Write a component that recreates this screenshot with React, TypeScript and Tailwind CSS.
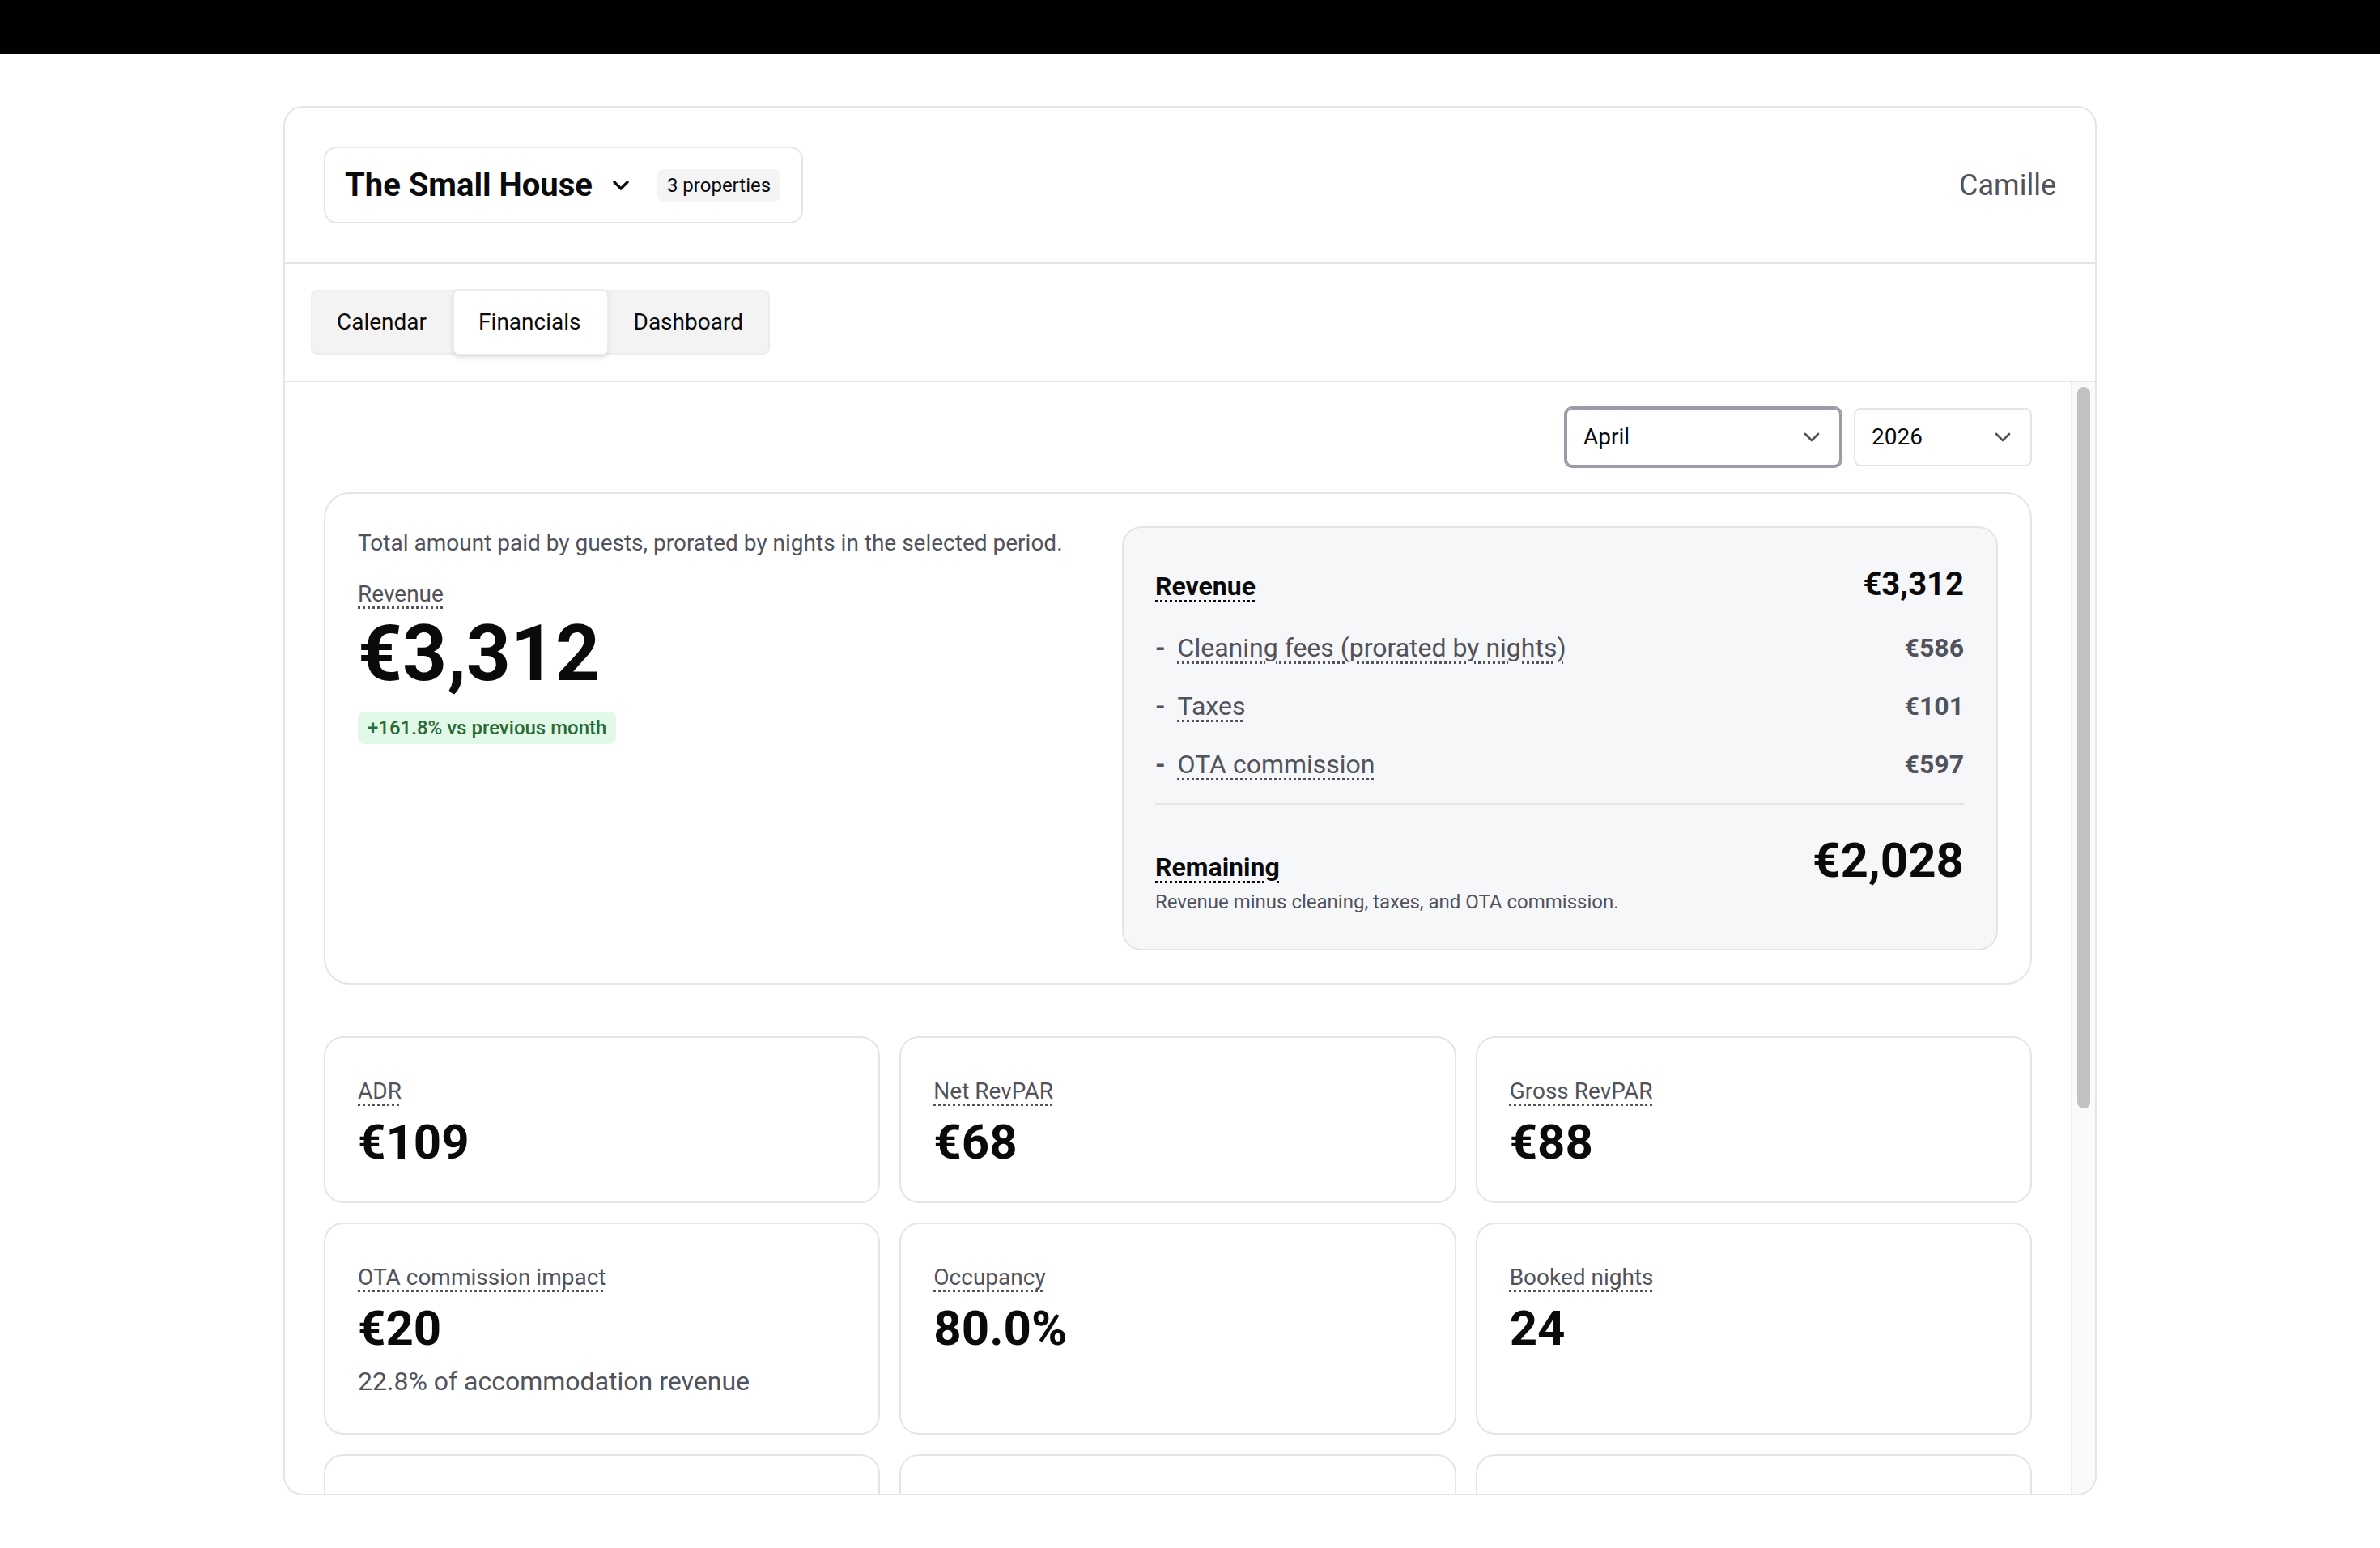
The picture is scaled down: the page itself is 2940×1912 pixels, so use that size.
import { ChevronDown } from 'lucide-react';

const dotted = 'underline decoration-dotted decoration-[3px] underline-offset-[6px]';

const tabs = [
  { label: 'Calendar', className: 'flex items-center pr-[32px] pl-[30px] text-[28px]' },
  {
    label: 'Financials',
    className:
      'relative -my-[3px] flex items-center rounded-lg border-2 border-[#ececec] bg-white pr-[32px] pl-[30px] text-[28px] shadow-md',
  },
  { label: 'Dashboard', className: 'flex items-center px-[31px] text-[28px]' },
];

const deductions = [
  { label: 'Cleaning fees (prorated by nights)', value: '€586' },
  { label: 'Taxes', value: '€101' },
  { label: 'OTA commission', value: '€597' },
];

const metrics = [
  { label: 'ADR', value: '€109' },
  { label: 'Net RevPAR', value: '€68' },
  { label: 'Gross RevPAR', value: '€88' },
  { label: 'OTA commission impact', value: '€20', note: '22.8% of accommodation revenue' },
  { label: 'Occupancy', value: '80.0%' },
  { label: 'Booked nights', value: '24' },
];

function Metric({ label, value, note }: { label: string; value: string; note?: string }) {
  return (
    <div className="rounded-[24px] border-2 border-[#e5e5e5] px-10 pt-10 pb-[37px]">
      <div className="text-[32px] leading-[48px]">
        <span className={`text-[28px] text-[#52525b] ${dotted}`}>{label}</span>
      </div>
      <div className="mt-[3px] text-[60px] leading-[72px] font-bold">{value}</div>
      {note && <div className="mt-[5px] mb-[3px] text-[32px] leading-[48px] text-[#52525b]">{note}</div>}
    </div>
  );
}

export default function App() {
  return (
    <div className="min-h-screen bg-white font-[Roboto,sans-serif] text-[#0a0a0a]">
      <div className="h-[67px] bg-black" />

      <div className="mx-auto mt-16 flex h-[1716px] w-[2240px] flex-col overflow-hidden rounded-[24px] border-2 border-[#e5e5e5]">
        {/* Header */}
        <div className="flex items-center justify-between border-b-2 border-[#e5e5e5] px-12 py-12">
          <div className="flex h-[95px] w-[592px] items-center rounded-[16px] border-2 border-[#e5e5e5] pl-6">
            <span className="text-[40px] font-bold">The Small House</span>
            <ChevronDown size={32} strokeWidth={2.5} className="ml-[19px]" />
            <span className="ml-[29px] flex h-10 items-center rounded-lg bg-[#f4f4f5] px-3 text-[24px] font-normal">
              3 properties
            </span>
          </div>
          <span className="text-[36px] text-[#52525b]">Camille</span>
        </div>

        {/* Tabs */}
        <div className="border-b-2 border-[#e5e5e5] px-8 py-8">
          <div className="flex h-20 w-fit items-stretch rounded-lg border-2 border-[#ececec] bg-[#f3f3f3]">
            {tabs.map((tab) => (
              <div key={tab.label} className={tab.className}>
                {tab.label}
              </div>
            ))}
          </div>
        </div>

        <div className="flex min-h-0 flex-1">
          <div className="min-w-0 flex-1 overflow-hidden px-12 pt-8">
            <div className="flex justify-end gap-4">
              <div className="flex h-[72px] w-[340px] items-center justify-between rounded-lg border-2 border-[#9a9ca6] pr-[18px] pl-[20px] text-[28px] outline-2 outline-[#9a9ca6]">
                April
                <ChevronDown size={32} className="text-[#52525b]" />
              </div>
              <div className="flex h-[72px] w-[220px] items-center justify-between rounded-lg border-2 border-[#e5e5e5] pr-[18px] pl-[20px] text-[28px]">
                2026
                <ChevronDown size={32} className="text-[#52525b]" />
              </div>
            </div>

            {/* Revenue summary */}
            <div className="mt-8 grid grid-cols-[1fr_1082px] rounded-[32px] border-2 border-[#e5e5e5] p-10">
              <div className="pt-px">
                <p className="text-[28px] leading-10 text-[#52525b]">
                  Total amount paid by guests, prorated by nights in the selected period.
                </p>
                <div className="mt-[17px] text-[32px] leading-[48px]">
                  <span className={`text-[28px] text-[#52525b] ${dotted}`}>Revenue</span>
                </div>
                <div className="mt-px text-[96px] leading-[96px] font-bold">€3,312</div>
                <div className="mt-6 w-fit rounded-lg bg-[#e3f9e8] px-3 text-[24px] leading-10 font-medium text-[#2a6a35]">
                  +161.8% vs previous month
                </div>
              </div>

              <div className="rounded-[24px] border-2 border-[#e5e5e5] bg-[#f6f7f9] pt-[42px] pr-10 pb-[42px] pl-[39px]">
                <div className="mb-[26px] flex items-baseline justify-between">
                  <span className={`text-[32px] font-bold ${dotted}`}>Revenue</span>
                  <span className="text-[40px] leading-14 font-bold">€3,312</span>
                </div>
                <div className="flex flex-col gap-6">
                  {deductions.map((d) => (
                    <div key={d.label} className="flex items-baseline justify-between text-[32px] leading-[48px] text-[#52525b]">
                      <span>
                        <span className="mr-[15px] font-bold">-</span>
                        <span className={dotted}>{d.label}</span>
                      </span>
                      <span className="font-bold">{d.value}</span>
                    </div>
                  ))}
                </div>
                <div className="mt-6 flex items-start justify-between border-t-2 border-[#e5e5e5] pt-[33px]">
                  <div className="pt-5">
                    <div className={`text-[32px] leading-[48px] font-bold ${dotted}`}>Remaining</div>
                    <div className="mt-[3px] text-[24px] leading-8 text-[#52525b]">Revenue minus cleaning, taxes, and OTA commission.</div>
                  </div>
                  <span className="text-[60px] leading-[72px] font-bold">€2,028</span>
                </div>
              </div>
            </div>

            {/* Metrics */}
            <div className="mt-16 grid grid-cols-3 gap-6">
              {metrics.map((m) => (
                <Metric key={m.label} {...m} />
              ))}
              <div className="h-[204px] rounded-[24px] border-2 border-[#e5e5e5]" />
              <div className="h-[204px] rounded-[24px] border-2 border-[#e5e5e5]" />
              <div className="h-[204px] rounded-[24px] border-2 border-[#e5e5e5]" />
            </div>
          </div>

          <div className="w-[30px] shrink-0 border-l-2 border-[#ececec] bg-[#fafafa] pt-[6px] pl-[6px]">
            <div className="h-[891px] w-4 rounded-full bg-[#c1c1c1]" />
          </div>
        </div>
      </div>
    </div>
  );
}
